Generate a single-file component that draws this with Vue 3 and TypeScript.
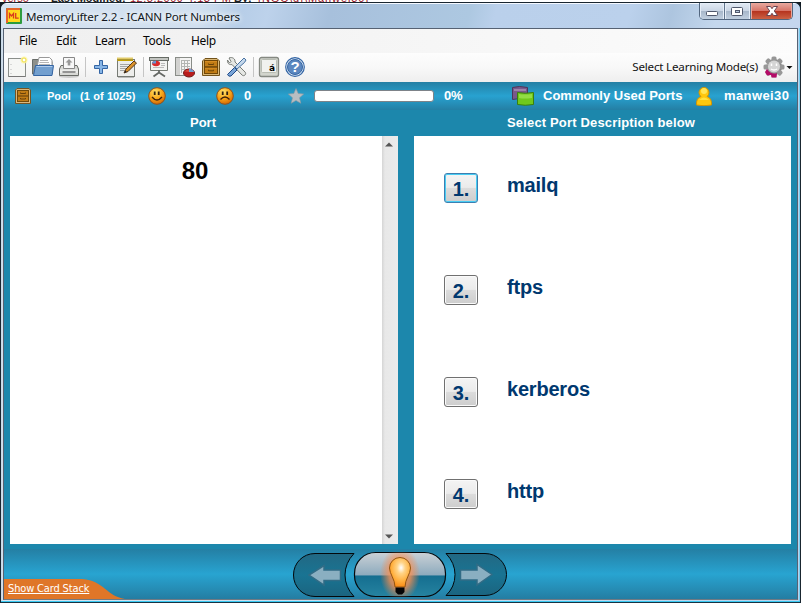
<script setup lang="ts">
interface Choice { id: number; label: string }
const menus: { label: string; cls: string }[] = [
  { label: 'File', cls: 'm-file' },
  { label: 'Edit', cls: 'm-edit' },
  { label: 'Learn', cls: 'm-learn' },
  { label: 'Tools', cls: 'm-tools' },
  { label: 'Help', cls: 'm-help' },
]
const choices: Choice[] = [
  { id: 1, label: 'mailq' },
  { id: 2, label: 'ftps' },
  { id: 3, label: 'kerberos' },
  { id: 4, label: 'http' },
]
</script>

<template>
  <div class="desktop">
    <div class="behind"><span class="b1">verso</span><b class="b2">Last Modified:</b><span class="b3">12.8.2009 4:13 PM</span><b class="b4">By:</b><span class="b5">[NGC\d]\Manwei30]</span></div>
    <div class="window">
      <header class="titlebar">
        <svg class="logo" viewBox="0 0 16 16" width="16" height="16">
          <rect width="16" height="16" rx="1" fill="#2c9b3d" /><path d="M0 1V15H2V2H14V0H1Z" fill="#e5652a" />
          <rect x="2" y="2" width="12" height="12" fill="#ffd91c" />
          <path d="M3.5 10.5V5.5L5.500 8L7.500 5.500V10.500M9.700 5V10.200H12.700" fill="none" stroke="#d83a1e" stroke-width="1.300" />
        </svg>
        <span class="title">MemoryLifter 2.2 - ICANN Port Numbers</span>
        <div class="controls">
          <span class="ctl min"><svg viewBox="0 0 25 16" width="25" height="16"><rect x="6.500" y="8.500" width="11" height="4" rx="1" fill="#fff" stroke="#50586c" /></svg></span>
          <span class="ctl max"><svg viewBox="0 0 25 16" width="25" height="16"><rect x="6.500" y="4.500" width="11" height="8" rx="1" fill="#fff" stroke="#50586c" /><rect x="10.500" y="7.500" width="4" height="2" fill="#b6c7da" stroke="#50586c" /></svg></span>
          <span class="ctl close"><svg viewBox="0 0 42 16" width="42" height="16"><path d="M15.500 3.500H19.500L21 5.700L22.500 3.500H26.500L23.300 8L26.500 12.500H22.500L21 10.300L19.500 12.500H15.500L18.700 8Z" fill="#fff" stroke="#6a4450" /></svg></span>
        </div>
      </header>

      <div class="client">
        <nav class="menubar"><span v-for="m in menus" :key="m.label" :class="['menu', m.cls]">{{ m.label }}</span></nav>

        <div class="toolbar">
          <span class="tool"><svg viewBox="0 0 26 24" width="26" height="24">
            <rect x="4.500" y="3.500" width="17" height="18" fill="#f5f6f4" stroke="#8b8f8b" /><path d="M5 21.500H21" stroke="#777" /><path d="M7 9v1M7 14v1M7 18v1" stroke="#b9b9b9" />
            <circle cx="20" cy="5" r="3.500" fill="#fff69a" opacity=".8" /><circle cx="20" cy="5" r="2" fill="#fff" stroke="#eedc45" />
          </svg></span>
          <span class="tool"><svg viewBox="0 0 26 24" width="26" height="24">
            <path d="M2.500 19V4.500H8L10 6.500H22V19Z" fill="#8d908c" stroke="#696d69" />
            <path d="M7 12L9 2.500H19.500L22 5V13Z" fill="#fff" stroke="#999" /><path d="M10 5.500H18M9.500 7.500H19M9 9.500H20" stroke="#b5b5b5" />
            <path d="M5.500 10.500H23.500L22 20.500H3.500Z" fill="#729fcf" stroke="#3465a4" /><path d="M6.500 11.500H22.300" stroke="#adcaec" />
          </svg></span>
          <span class="tool"><svg viewBox="0 0 26 24" width="26" height="24">
            <ellipse cx="13" cy="21.500" rx="10" ry="1.500" fill="#ccc" />
            <path d="M5 10.500H21L22.500 14V20.500H3.500V14Z" fill="#d8d9d6" stroke="#686b67" />
            <path d="M7.500 13.500V2.500H18.500V13.500Z" fill="#f8f8f8" stroke="#888" /><path d="M13 4L16.500 7.500H14.300V10.500H11.700V7.500H9.500Z" fill="#999" />
            <path d="M4 14.500H22V18H4Z" fill="#eaebe9" /><path d="M6.500 17H19.500" stroke="#777" stroke-width="1.500" />
          </svg></span>
          <i class="sep" />
          <span class="tool"><svg viewBox="0 0 26 24" width="26" height="24"><path d="M11.500 5.500H14.500V10.500H19.500V13.500H14.500V18.500H11.500V13.500H6.500V10.500H11.500Z" fill="#87b5e6" stroke="#3465a4" /></svg></span>
          <span class="tool"><svg viewBox="0 0 26 24" width="26" height="24">
            <rect x="3.500" y="4.500" width="17" height="17" fill="#ededeb" stroke="#777b75" /><path d="M4 22.500H20" stroke="#bbb" />
            <path d="M4 2.500V6M6 2.500V6M8 2.500V6M10 2.500V6M12 2.500V6M14 2.500V6M16 2.500V6M18 2.500V6" stroke="#d1ab09" stroke-width="1.200" /><path d="M4 5.500H19" stroke="#c4a000" />
            <path d="M6 9.500H17M6 11.500H16M6 13.500H14M6 15.500H11" stroke="#a5a5a5" />
            <path d="M10 18L12 14L20 6L22.500 8L14 16.500Z" fill="#d9912a" stroke="#54371a" /><path d="M10 18L11.500 15.500L12.700 17Z" fill="#222" />
          </svg></span>
          <i class="sep" />
          <span class="tool"><svg viewBox="0 0 26 24" width="26" height="24">
            <path d="M4.500 4V15.500H21.500V4Z" fill="#f3f4f2" stroke="#777b75" /><rect x="3.500" y="2.500" width="19" height="3" fill="#c3c5c1" stroke="#666b65" />
            <ellipse cx="10" cy="8.500" rx="4" ry="2.800" fill="#d92b2b" /><path d="M10 8.500V5.700A4 2.800 0 0 0 6 8.500Z" fill="#6594d2" /><path d="M15 8.500H19M15 10.500H19M7 12.500H18" stroke="#bbb" />
            <path d="M13 15V17.500L7.500 21.500M13 17.500L19 21.500" fill="none" stroke="#656865" stroke-width="1.800" />
          </svg></span>
          <span class="tool"><svg viewBox="0 0 26 24" width="26" height="24">
            <rect x="3.500" y="2.500" width="16" height="18" fill="#f4f4f3" stroke="#898d88" /><path d="M4 3H8V20H4Z" fill="#d2d2d0" />
            <path d="M9 5.500H18M9 8.500H18M9 11.500H18M9 14.500H14M9.500 5V18M12.500 5V14M15.500 5V13" stroke="#b2b5b2" />
            <ellipse cx="17" cy="18" rx="5.500" ry="4" fill="#b91c1c" stroke="#6f1a1a" /><path d="M17 17V13.500Q21.500 14 22 17Z" fill="#729fcf" /><path d="M12.500 16.500Q14 14.500 17 14.500V17Z" fill="#d9463a" />
          </svg></span>
          <span class="tool"><svg viewBox="0 0 26 24" width="26" height="24">
            <path d="M4.500 6L7 3.500H19L21.500 6V20.500H4.500Z" fill="#dab878" stroke="#72531b" /><rect x="6.500" y="5.500" width="13" height="13" fill="#c27d16" stroke="#704706" />
            <path d="M7 12H19" stroke="#694307" stroke-width="1.300" /><path d="M7 6.500H19M7 13.300H19" stroke="#e09326" stroke-width=".7" /><path d="M10.500 8.500V9.500H15.500V8.500M10.500 14.800V15.800H15.500V14.800" fill="none" stroke="#694307" />
          </svg></span>
          <span class="tool"><svg viewBox="0 0 26 24" width="26" height="24">
            <path d="M5 3L7 6.500L5.500 8L3.500 5C3 9 6 10 8 9.500L18 20C20 22 23 19 21 17L11 7C11.500 4 8.500 1.500 5 3Z" fill="#e5e7e4" stroke="#777b76" />
            <path d="M20 3L22 5L20.500 7.500L13 14L11 12L18 5Z" fill="#c4d8ec" stroke="#4a73a2" /><path d="M10.500 12.500L13 15L7 21Q4.500 22 3.500 19.500Z" fill="#78a4d7" stroke="#204a87" />
          </svg></span>
          <i class="sep" />
          <span class="tool"><svg viewBox="0 0 26 24" width="26" height="24">
            <rect x="3.500" y="2.500" width="19" height="19" rx="2" fill="#d2d5cd" stroke="#858982" stroke-width="1.300" /><rect x="5.500" y="4.500" width="15" height="13" rx="1" fill="#f1f2ee" stroke="#b8bcb3" />
            <text x="13" y="15.500" class="keytext">á</text>
          </svg></span>
          <span class="tool"><svg viewBox="0 0 26 24" width="26" height="24">
            <circle cx="13" cy="12" r="9.300" fill="#dfeaf6" stroke="#3465a4" stroke-width="1.200" /><circle cx="13" cy="12" r="7.500" fill="#5d88bf" stroke="#3465a4" />
            <text x="13" y="17" text-anchor="middle" class="helptext">?</text>
          </svg></span>
          <div class="mode">
            <span class="mode-label">Select Learning Mode(s)</span>
            <svg viewBox="0 0 31 24" width="31" height="24">
              <defs><linearGradient id="gear" x1="0" y1="0" x2="1" y2="0"><stop offset="0" stop-color="#c2c2c2" /><stop offset="1" stop-color="#6f6f6f" /></linearGradient></defs>
              <g fill="#979797"><circle cx="11" cy="12" r="8" fill="url(#gear)" /><rect x="8.500" y="1.500" width="5" height="21" rx="1.500" /><rect x="8.500" y="1.500" width="5" height="21" rx="1.500" transform="rotate(45 11 12)" /><rect x="8.500" y="1.500" width="5" height="21" rx="1.500" transform="rotate(90 11 12)" /><rect x="8.500" y="1.500" width="5" height="21" rx="1.500" transform="rotate(135 11 12)" /></g>
              <path d="M2 17L4 14Q8 20 14 18L13.500 22.500H8.500L8 20L4 20.500Z" fill="#b40b67" />
              <circle cx="11" cy="11.500" r="6" fill="#d5d5d5" /><path d="M8.500 8.500V11M13.500 8.500V11M8 14Q11 16 14 14" fill="none" stroke="#fff" stroke-width="1.500" />
              <path d="M23.500 11H29.500L26.500 14Z" fill="#111" />
            </svg>
          </div>
        </div>

        <section class="status">
          <svg class="s-drawer" viewBox="0 0 16 16" width="16" height="16"><path d="M.5 2L2 .5H14L15.500 2V15.500H.5Z" fill="#d9b77e" stroke="#755421" /><rect x="2.500" y="2.500" width="11" height="11" fill="#c27d16" stroke="#714908" /><path d="M3 8H13" stroke="#5e3c09" /><path d="M5.500 4.500V5.500H10.500V4.500M5.500 10V11H10.500V10" fill="none" stroke="#69420a" /></svg>
          <span class="t-pool">Pool</span>
          <span class="t-count">(1 of 1025)</span>
          <svg class="s-happy" viewBox="0 0 18 18" width="18" height="18"><defs><radialGradient id="face" cx=".4" cy=".25" r=".8"><stop offset="0" stop-color="#ffe26a" /><stop offset=".5" stop-color="#f9a81b" /><stop offset="1" stop-color="#cf6000" /></radialGradient></defs><circle cx="9" cy="9" r="8.300" fill="url(#face)" stroke="#91501a" /><path d="M6.700 4.500V8M10.700 4.500V8" stroke="#302010" stroke-width="1.800" /><path d="M4 10Q9 16 14 10" fill="none" stroke="#402108" stroke-width="1.300" /></svg>
          <span class="t-zero1">0</span>
          <svg class="s-sad" viewBox="0 0 18 18" width="18" height="18"><circle cx="9" cy="9" r="8.300" fill="url(#face)" stroke="#91501a" /><path d="M6.700 4.500V8M11.200 4.500V8" stroke="#302010" stroke-width="1.800" /><path d="M4.500 12.500Q9 7.500 13.500 12.500" fill="none" stroke="#402108" stroke-width="1.300" /></svg>
          <span class="t-zero2">0</span>
          <svg class="s-star" viewBox="0 0 16 16" width="16" height="16"><path d="M8 .5L10.200 5.500L15.700 6L11.500 9.800L12.800 15.300L8 12.400L3.200 15.300L4.500 9.800L.3 6L5.800 5.500Z" fill="#b9bec2" stroke="#8e989f" stroke-width=".6" /></svg>
          <span class="progress" />
          <span class="t-pct">0%</span>
          <svg class="s-cards" viewBox="0 0 22 20" width="22" height="20"><path d="M.5 1.500Q7 -.5 15.500 1.500V13.500Q7 11.500 .5 13.500Z" fill="#79588b" stroke="#4d3558" /><path d="M2 3H14V5H2Z" fill="#9d83aa" /><path d="M5.500 6.500Q13 8 21.500 6.500V18.500Q13 20 5.500 18.500Z" fill="#70c81c" stroke="#397e0d" /><path d="M7 8Q12 9 20 8V12Q12 13 7 12Z" fill="#92dd44" /></svg>
          <span class="t-ports">Commonly Used Ports</span>
          <svg class="s-user" viewBox="0 0 16 20" width="16" height="20"><path d="M.5 19Q0 12 5 10.500A5 5 0 1 1 11 10.500Q16 12 15.500 19Q8 20.500 .5 19Z" fill="#ffc70c" stroke="#d39400" /><circle cx="8" cy="5" r="3" fill="#ffe557" /><path d="M3 14Q8 9 13 14Z" fill="#ffe13f" /></svg>
          <span class="t-user">manwei30</span>
        </section>

        <main class="study">
          <section class="question">
            <h2 class="head-q">Port</h2>
            <div class="qpanel">
              <div class="qtext">80</div>
              <div class="scroll"><svg viewBox="0 0 8 5" width="8" height="5"><path d="M0 4.500L4 .5L8 4.500Z" fill="#555" /></svg><svg viewBox="0 0 8 5" width="8" height="5"><path d="M0 .5H8L4 4.500Z" fill="#555" /></svg></div>
            </div>
          </section>
          <section class="answers">
            <h2 class="head-a">Select Port Description below</h2>
            <div class="apanel">
              <div v-for="c in choices" :key="c.id" class="choice">
                <button type="button" :class="['num', { focused: c.id === 1 }]">{{ c.id }}.</button>
                <span class="answer">{{ c.label }}</span>
              </div>
            </div>
          </section>
        </main>

        <footer class="footer">
          <div class="stack">
            <svg class="tab" viewBox="0 0 121 20" width="121" height="20"><path d="M0 0H78C101 2 102 17 121 20H0Z" fill="#df7628" /></svg>
            <span class="stack-label">Show Card Stack</span>
          </div>
          <svg class="navs" viewBox="0 0 216 50" width="216" height="50">
            <defs>
              <linearGradient id="side" x1="0" y1="0" x2="0" y2="1"><stop offset="0" stop-color="#226883" /><stop offset=".5" stop-color="#197493" /><stop offset="1" stop-color="#1b647f" /></linearGradient>
              <linearGradient id="mid" x1="0" y1="0" x2="0" y2="1"><stop offset="0" stop-color="#cbd1d6" /><stop offset=".52" stop-color="#8caabd" /><stop offset=".525" stop-color="#146e90" /><stop offset="1" stop-color="#2683a0" /></linearGradient>
              <radialGradient id="glow"><stop offset="0" stop-color="#ffad52" /><stop offset=".55" stop-color="#ff9150" stop-opacity=".75" /><stop offset="1" stop-color="#f78342" stop-opacity="0" /></radialGradient>
              <radialGradient id="bulb" cx=".55" cy=".35" r=".65"><stop offset="0" stop-color="#fff" /><stop offset=".3" stop-color="#ffd386" /><stop offset=".7" stop-color="#ffae3c" /><stop offset="1" stop-color="#f98b16" /></radialGradient>
              <clipPath id="midclip"><rect x="62" y="3.500" width="91" height="44" rx="21" /></clipPath>
            </defs>
            <path d="M62 4.500H23C11 4.500 1.500 14 1.500 26C1.500 38 11 47.500 23 47.500H62Q53 38 53 26Q53 14 62 4.500Z" fill="url(#side)" stroke="#03080b" />
            <path d="M154 4.500H193C205 4.500 214.500 14 214.500 25.500C214.500 37 205 46.500 193 46.500H154Q163 38 163 25.500Q163 14 154 4.500Z" fill="url(#side)" stroke="#03080b" />
            <rect x="62.500" y="3.500" width="91" height="44" rx="21" fill="url(#mid)" stroke="#05090c" stroke-width="1.200" />
            <path d="M17 26L32 16.500V21H48.500V31.500H32V36Z" fill="#8aafc1" stroke="#316c86" stroke-width="1.500" />
            <path d="M200 25.500L185 15.500V21H168.500V31H185V36Z" fill="#8aafc1" stroke="#316c86" stroke-width="1.500" />
            <ellipse cx="108" cy="25" rx="20" ry="27" fill="url(#glow)" clip-path="url(#midclip)" />
            <path d="M103 38C103 30 97.500 25 97.500 19A10.500 10.500 0 1 1 118.500 19C118.500 25 113 30 113 38Z" fill="url(#bulb)" stroke="#925411" /><path d="M103.500 38.500H112.500V43L110 45.500H106L103.500 43Z" fill="#050505" />
          </svg>
        </footer>
      </div>
    </div>
  </div>
</template>

<style>
body { margin: 0; overflow: hidden; }
</style>

<style scoped>
* { box-sizing: border-box; }
svg { display: block; flex: none; }
.desktop { width: 801px; height: 603px; overflow: hidden; background: #101a22; display: flex; flex-direction: column; }
.behind { height: 2px; flex: none; background: #fff; overflow: hidden; display: flex; font: 11px/7px "Liberation Sans", sans-serif; color: #981327; white-space: nowrap; align-items: flex-end; }
.behind > * { flex: none; }
.b1 { width: 51px; padding-left: 2px; }.b2 { width: 79px; color: #222; }.b3 { width: 104px; letter-spacing: .5px; }.b4 { width: 24px; color: #222; }.b5 { letter-spacing: .9px; }
.window { height: 601px; border: 1px solid #192630; border-radius: 7px 7px 1px 1px; padding: 0 2px 2px; background: linear-gradient(90deg, #c5d6e5, #d6e3ef 2px, #b7d3ed 798px, #36c7f1 799px); overflow: hidden; display: flex; flex-direction: column; border-bottom-color: #173343; box-shadow: inset 0 -1px #38c9f2; }
.titlebar { height: 25px; flex: none; margin: 0 -2px; padding-left: 5px; display: flex; align-items: flex-start; border-top: 1px solid #f4f8ff; background: linear-gradient(105deg, #d6e3f1 0, #d0dfef 195px, #b7cee8 235px, #bdd2eb 260px, #a7c0dc 320px, #adc8e1 455px, #bad0eb 480px, #bbd1ec 610px, #adc5df 650px, #c4d7ed 695px, #c5d6ee 100%); }
.logo { margin-top: 4px; }
.title { margin: 4px 0 0 4px; font: 11.6px/17px "Noto Sans", sans-serif; color: #121720; white-space: nowrap; letter-spacing: -.15px; text-shadow: 0 0 5px #fff, 0 0 7px #fff; }
.controls { height: 17px; margin: -1px 7px 0 auto; display: flex; border: 1px solid #52667f; border-top: 0; border-radius: 0 0 5px 5px; overflow: hidden; }
.ctl { width: 25px; height: 17px; border-right: 1px solid #60748c; background: linear-gradient(#e2eaf4, #c9d5e4 48%, #a8b8cb 50%, #c4d2e2); box-shadow: inset 0 0 0 1px #e6eef8; }
.ctl.max { width: 26px; }
.ctl.close { width: 41px; border: 0; background: linear-gradient(#e8aaa1, #d77568 45%, #b63520 50%, #ce6749); box-shadow: inset 0 0 0 1px #eba69a; }
.client { flex: 1; min-height: 0; border: 1px solid #566273; border-bottom-color: #707a83; display: flex; flex-direction: column; background: #1c87ac; }
.menubar { height: 24px; flex: none; display: flex; background: linear-gradient(90deg, #efefef, #fcfcfc); font: 12px/24px "Noto Sans", sans-serif; color: #050505; padding-left: 15px; }
.menu { letter-spacing: -.3px; }
.m-file { width: 37px; }.m-edit { width: 39px; }.m-learn { width: 48px; }.m-tools { width: 48px; }
.toolbar { height: 29px; flex: none; display: flex; align-items: flex-start; padding-top: 2px; background: linear-gradient(#fdfdfd, #f8f8f8 50%, #eee); }
.tool { width: 26px; height: 24px; flex: none; }
.sep { width: 6px; height: 20px; margin-top: 2px; background: linear-gradient(90deg, transparent 3px, #c5c5c5 3px, #c5c5c5 4px, transparent 4px); }
.keytext { font: bold 9px "DejaVu Sans", sans-serif; }
.helptext { font: bold 15px "Liberation Sans", sans-serif; fill: #fff; }
.mode { margin-left: auto; margin-right: 3px; display: flex; height: 24px; }
.mode-label { font: 11.6px/24px "Noto Sans", sans-serif; letter-spacing: -.2px; margin-right: 5px; color: #111; }
.status { height: 28px; flex: none; display: flex; align-items: center; background: linear-gradient(#247fa4, #28a2d0 50%, #247fa4); color: #fff; font: bold 13px/20px "Liberation Sans", sans-serif; white-space: nowrap; }
.status > * { flex: none; }
.s-drawer { margin-left: 11px; }
.t-pool { width: 33px; margin-left: 16px; font-size: 11px; }.t-count { width: 68px; font-size: 11px; letter-spacing: .1px; }
.t-zero1 { width: 50px; padding-left: 10px; }.t-zero2 { width: 54px; padding-left: 10px; }
.progress { width: 120px; height: 12px; margin-left: 10px; border: 1px solid #7d8389; border-radius: 3px; background: #fff; }
.t-pct { width: 78px; padding-left: 10px; letter-spacing: -.3px; }.t-ports { width: 162px; padding-left: 9px; }.t-user { padding-left: 12px; letter-spacing: .4px; }
.study { height: 434px; flex: none; padding: 0 6px; display: grid; grid-template-columns: 388px 377px; column-gap: 16px; }
h2 { height: 26px; margin: 0; font: bold 13px/25px "Liberation Sans", sans-serif; color: #fff; white-space: nowrap; }
.head-q { padding-left: 180px; }.head-a { padding-left: 93px; letter-spacing: .16px; }
.qpanel { height: 408px; background: #fff; display: flex; }
.qtext { width: 372px; padding: 20px 2px 0 0; text-align: center; font: bold 24px/30px "Liberation Sans", sans-serif; color: #000; }
.scroll { width: 16px; padding: 6px 4px 5px 3px; display: flex; flex-direction: column; justify-content: space-between; background: linear-gradient(90deg, #d5d5d5, #e8e8e8 3px, #ebebeb); }
.apanel { height: 408px; background: #fff; overflow: hidden; }
.choice { height: 102px; display: flex; padding: 37px 0 0 30px; }
.num { width: 34px; height: 30px; margin: 0; padding: 1px 0 0; border: 1px solid #707070; border-radius: 3px; background: linear-gradient(#f4f4f4, #ebebeb 48%, #dcdcdc 50%, #cdcdcd); color: #00386f; font: bold 20px/26px "Liberation Sans", sans-serif; box-shadow: inset 0 0 0 1px #fafafa; }
.num.focused { border-color: #3c7fb1; box-shadow: inset 0 0 0 1px #48cdf4; }
.answer { margin-left: 29px; font: bold 20px/24px "Liberation Sans", sans-serif; letter-spacing: -.2px; color: #00386f; }
.footer { flex: 1; min-height: 0; display: flex; align-items: flex-end; margin-top: 5px; background: linear-gradient(#247fa4, #28a4d1 50%, #247da2); }
.stack { width: 288px; height: 20px; display: grid; }
.stack > * { grid-area: 1 / 1; }
.stack-label { padding-left: 4px; color: #fff; font: 11px/20px "DejaVu Sans Condensed", "DejaVu Sans", sans-serif; text-decoration: underline; letter-spacing: -.15px; }
</style>
